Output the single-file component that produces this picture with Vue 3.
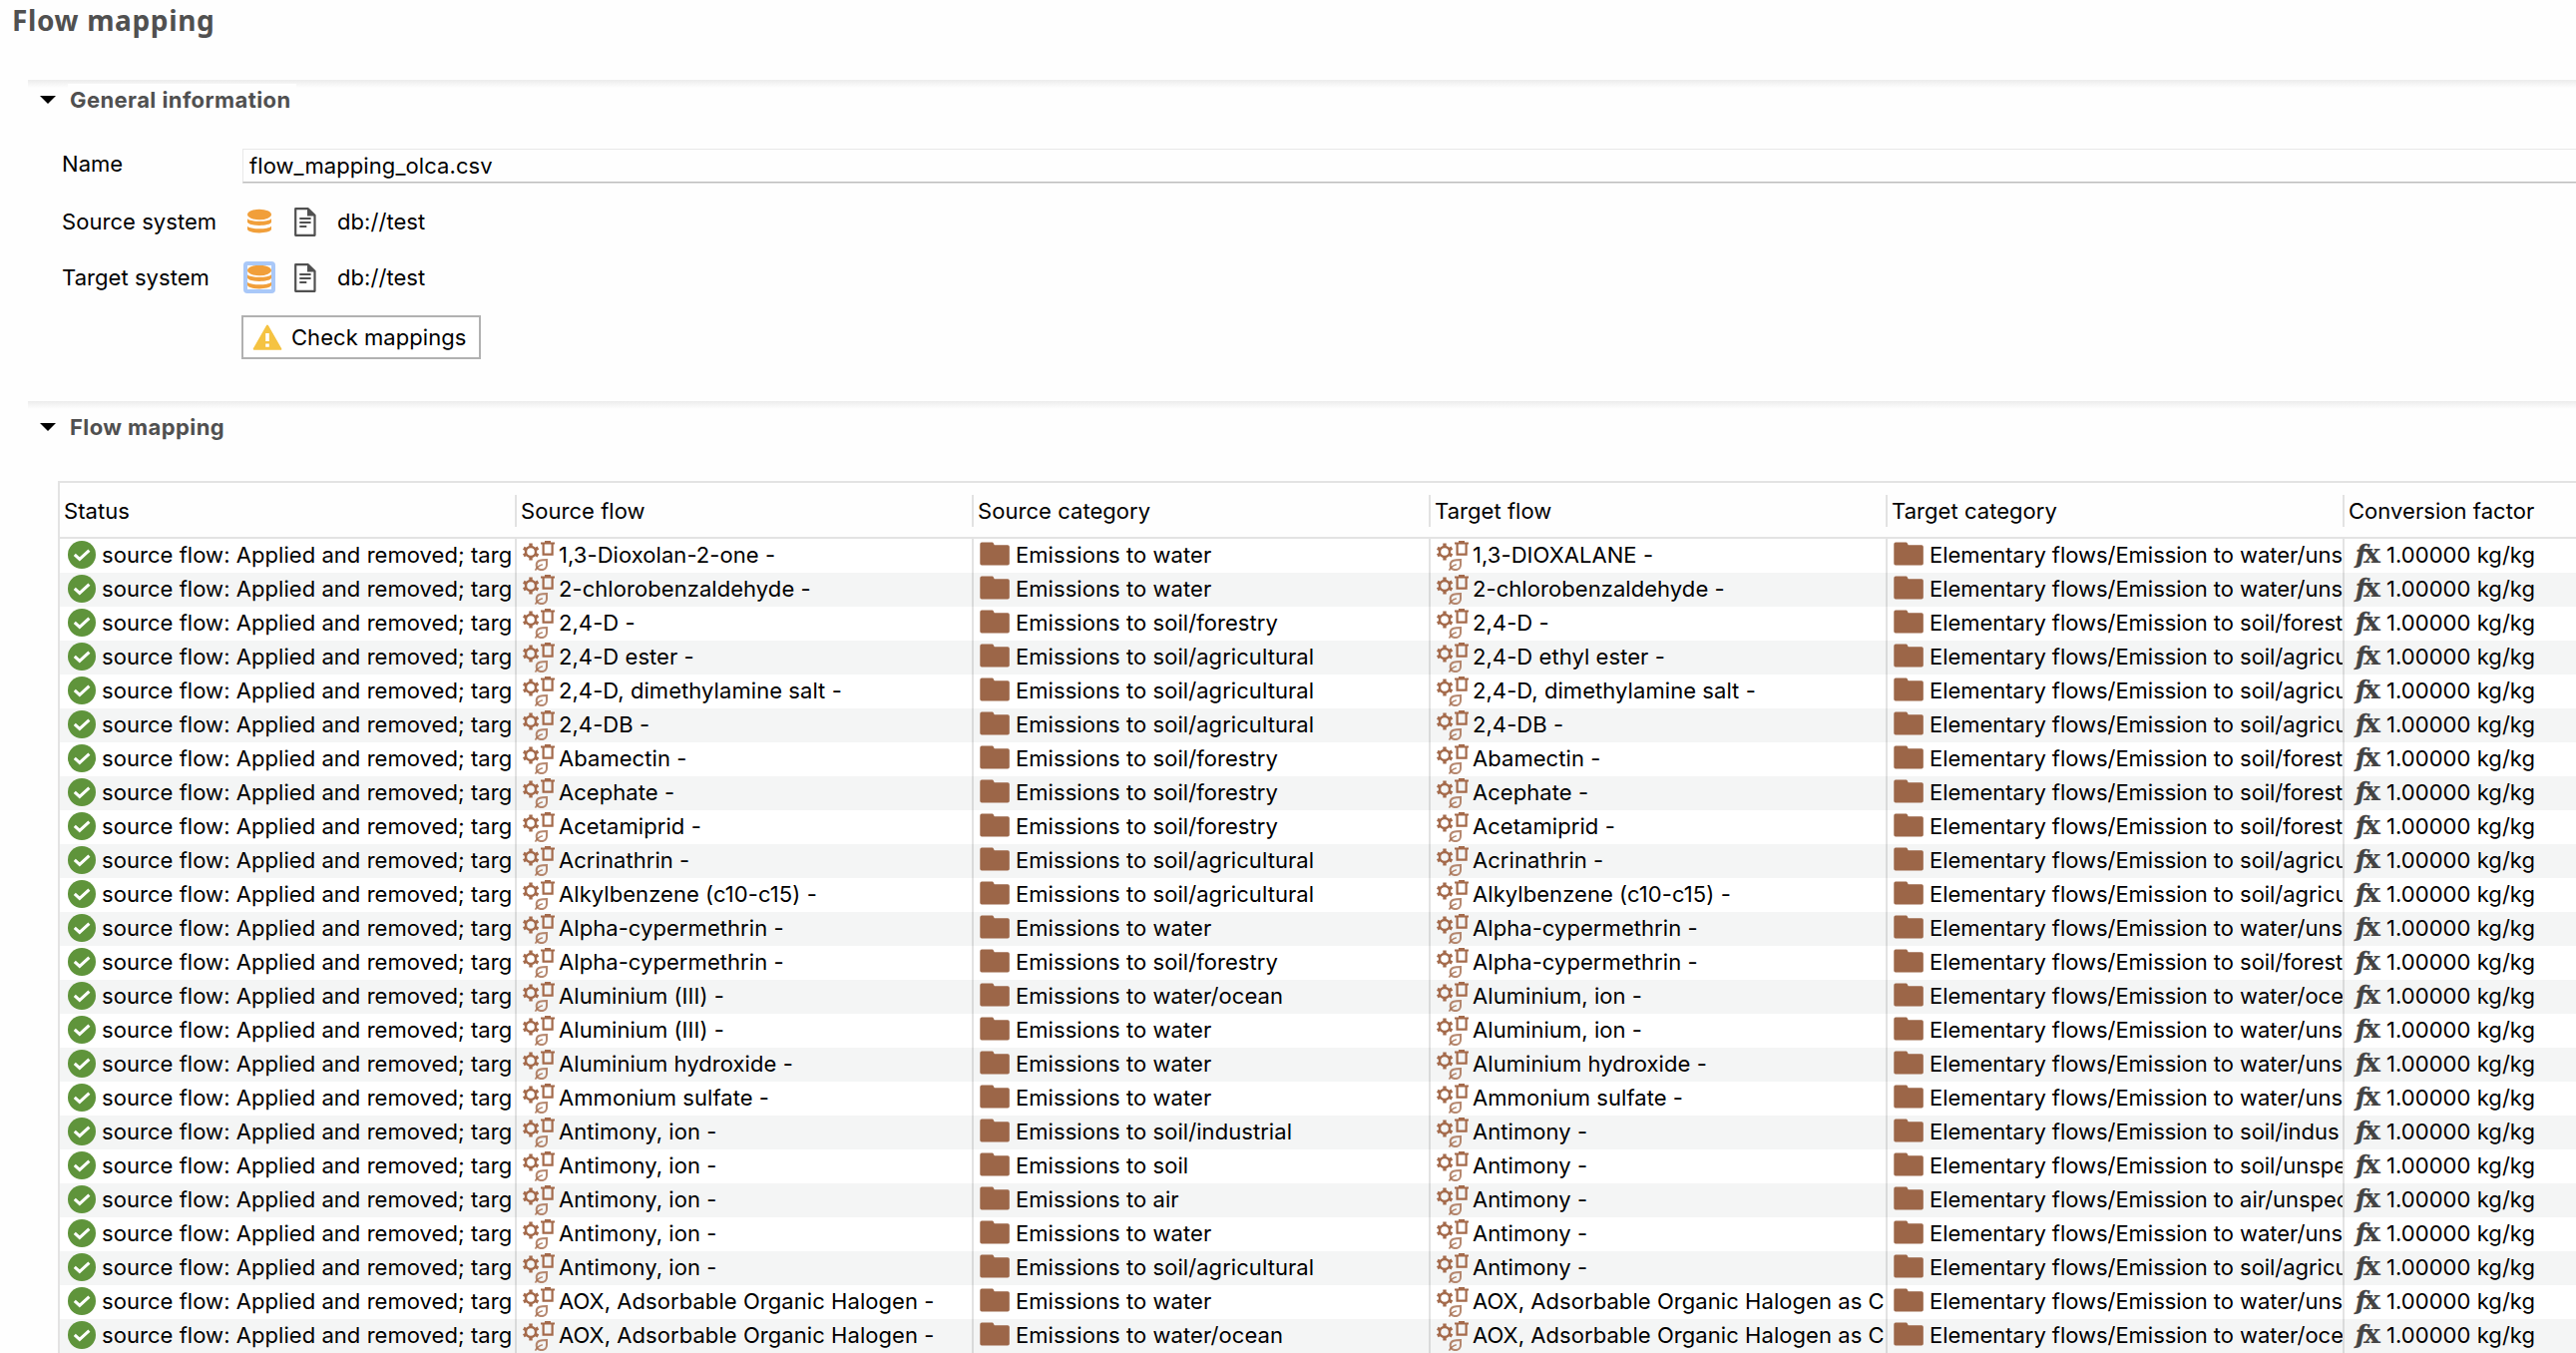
<script setup>
const columns = ['Status', 'Source flow', 'Source category', 'Target flow', 'Target category', 'Conversion factor']

const WATER = 'Elementary flows/Emission to water/uns'
const OCEAN = 'Elementary flows/Emission to water/ocea'
const FOREST = 'Elementary flows/Emission to soil/forest'
const AGRI = 'Elementary flows/Emission to soil/agricu'

const rows = [
  ['1,3-Dioxolan-2-one', 'water', '1,3-DIOXALANE', WATER],
  ['2-chlorobenzaldehyde', 'water', '2-chlorobenzaldehyde', WATER],
  ['2,4-D', 'soil/forestry', '2,4-D', FOREST],
  ['2,4-D ester', 'soil/agricultural', '2,4-D ethyl ester', AGRI],
  ['2,4-D, dimethylamine salt', 'soil/agricultural', '2,4-D, dimethylamine salt', AGRI],
  ['2,4-DB', 'soil/agricultural', '2,4-DB', AGRI],
  ['Abamectin', 'soil/forestry', 'Abamectin', FOREST],
  ['Acephate', 'soil/forestry', 'Acephate', FOREST],
  ['Acetamiprid', 'soil/forestry', 'Acetamiprid', FOREST],
  ['Acrinathrin', 'soil/agricultural', 'Acrinathrin', AGRI],
  ['Alkylbenzene (c10-c15)', 'soil/agricultural', 'Alkylbenzene (c10-c15)', AGRI],
  ['Alpha-cypermethrin', 'water', 'Alpha-cypermethrin', WATER],
  ['Alpha-cypermethrin', 'soil/forestry', 'Alpha-cypermethrin', FOREST],
  ['Aluminium (III)', 'water/ocean', 'Aluminium, ion', OCEAN],
  ['Aluminium (III)', 'water', 'Aluminium, ion', WATER],
  ['Aluminium hydroxide', 'water', 'Aluminium hydroxide', WATER],
  ['Ammonium sulfate', 'water', 'Ammonium sulfate', WATER],
  ['Antimony, ion', 'soil/industrial', 'Antimony', 'Elementary flows/Emission to soil/indus'],
  ['Antimony, ion', 'soil', 'Antimony', 'Elementary flows/Emission to soil/unspe'],
  ['Antimony, ion', 'air', 'Antimony', 'Elementary flows/Emission to air/unspec'],
  ['Antimony, ion', 'water', 'Antimony', WATER],
  ['Antimony, ion', 'soil/agricultural', 'Antimony', AGRI],
  ['AOX, Adsorbable Organic Halogen', 'water', 'AOX, Adsorbable Organic Halogen as C', WATER],
  ['AOX, Adsorbable Organic Halogen', 'water/ocean', 'AOX, Adsorbable Organic Halogen as C', 'Elementary flows/Emission to water/oce'],
].map(([source, category, target, targetCategory]) => [
  { icon: 'check', text: 'source flow: Applied and removed; targ' },
  { icon: 'flow', text: `${source} -` },
  { icon: 'folder', text: `Emissions to ${category}` },
  { icon: 'flow', text: target.endsWith('as C') ? target : `${target} -` },
  { icon: 'folder', text: targetCategory === OCEAN ? OCEAN.slice(0, -1) : targetCategory },
  { icon: 'formula', text: '1.00000 kg/kg' },
])

const systems = [
  { label: 'Source system', value: 'db://test', focused: false },
  { label: 'Target system', value: 'db://test', focused: true },
]
</script>

<template>
  <div class="editor">
    <svg class="defs" width="0" height="0" aria-hidden="true">
      <symbol id="check" viewBox="0 0 32 32">
        <circle cx="16" cy="16" r="14" fill="#5f943b" />
        <path d="M8.800 15.800l5 4.600 9.600-8.800" fill="none" stroke="#fff" stroke-width="3" />
      </symbol>
      <symbol id="flow" viewBox="0 0 32 32">
        <g fill="none" stroke="#a46a4b">
          <circle cx="8" cy="13" r="5" stroke-width="2.400" />
          <path d="M8 4.500v3M8 18.500v3M.8 9.200l2.700 1.500M12.500 15.300l2.900 1.600M.8 16.800l2.700-1.500M12.500 10.700L15.400 9.100" stroke-width="3.400" />
          <path d="M18 4.400h14M22 3h6" stroke-width="2" />
          <path d="M20.600 5v10.600h9V5" stroke-width="2.200" />
          <path d="M24 21c-5 0-10.300.2-10.300 5.300 0 3 2.200 4.800 5.200 4.800 3.200 0 5.100-2.200 5.100-5z" stroke-width="2" stroke-opacity=".8" />
          <path d="M12.500 31.600c1.500-3 3.200-4.800 7.300-5.900" stroke-width="1.700" stroke-opacity=".8" />
        </g>
      </symbol>
      <symbol id="folder" viewBox="0 0 32 32">
        <path d="M2 3.600h10.600q.8 0 1.200.8l.9 1.800H28q1.800 0 1.800 1.800v16.800q0 1.800-1.800 1.800H2Q.3 26.600.3 24.800V5.400Q.3 3.600 2 3.600z" fill="#9c6648" />
      </symbol>
      <symbol id="formula" viewBox="0 0 32 32">
        <text x="5" y="24" class="fx-f">f</text>
        <text x="13" y="24" class="fx-x" textLength="17" lengthAdjust="spacingAndGlyphs">x</text>
      </symbol>
      <symbol id="database" viewBox="0 0 32 32">
        <g fill="#f19f3a">
          <ellipse cx="16" cy="9" rx="12" ry="5.2" />
          <path d="M4 13.200c3 3.500 21 3.500 24 0v3.600c-2 4.200-22 4.200-24 0z" />
          <path d="M4 20.700c3 3.500 21 3.500 24 0v3.400c-2 4.400-22 4.400-24 0z" />
        </g>
      </symbol>
      <symbol id="document" viewBox="0 0 24 32">
        <g fill="none" stroke="#505050" stroke-width="2.200">
          <path d="M2.200 3.200h12.600l6.700 6.600v20H2.200z" stroke-linejoin="round" />
          <path d="M6.300 13h11.300M6.300 17h11.300M6.300 21h7" stroke-width="1.900" />
        </g>
        <path d="M14 3v7.600h7.500z" fill="#505050" />
      </symbol>
    </svg>

    <h1>Flow mapping</h1>

    <section class="general">
      <h2><i class="twistie"></i><span>General information</span></h2>
      <div class="form">
        <div class="field name">
          <label>Name</label>
          <div class="input">flow_mapping_olca.csv</div>
        </div>
        <div v-for="s in systems" :key="s.label" class="field system">
          <label>{{ s.label }}</label>
          <span class="db" :class="{ focused: s.focused }"><svg width="32" height="32"><use href="#database" /></svg></span>
          <svg class="doc" width="24" height="32"><use href="#document" /></svg>
          <span class="value">{{ s.value }}</span>
        </div>
        <div class="field">
          <label></label>
          <button type="button">
            <svg width="30" height="28" viewBox="0 0 30 28">
              <path d="M15 2.500L28.300 25.800H1.700z" fill="#f5c342" stroke="#f5c342" stroke-width="2" stroke-linejoin="round" />
              <path d="M15 10v8M15 20.600v3.200" stroke="#fff" stroke-width="3.600" />
            </svg>
            <span>Check mappings</span>
          </button>
        </div>
      </div>
    </section>

    <section class="mapping">
      <h2><i class="twistie"></i><span>Flow mapping</span></h2>
      <div class="table">
        <div class="row head">
          <div v-for="c in columns" :key="c" class="cell">{{ c }}</div>
        </div>
        <div v-for="(row, i) in rows" :key="i" class="row">
          <div v-for="(cell, j) in row" :key="j" class="cell" :class="cell.icon">
            <svg width="32" height="32"><use :href="'#' + cell.icon" /></svg>
            <span>{{ cell.text }}</span>
          </div>
        </div>
      </div>
    </section>
  </div>
</template>

<style>
body { background: #fefefe; }
.fx-f { font: italic bold 25px "DejaVu Serif", serif; fill: #444; stroke: #444; stroke-width: .4px; }
.fx-x { font: bold 26px "DejaVu Serif", serif; fill: #444; }
</style>

<style scoped>
.editor {
  width: 2582px;
  height: 1356px;
  overflow: hidden;
  color: #000;
  font: 22px/30px Inter, "Liberation Sans", sans-serif;
  letter-spacing: .05px;
  white-space: nowrap;
}
.defs { position: absolute; }
svg { display: block; flex: none; }

h1 {
  box-sizing: border-box;
  height: 80px;
  margin: 0;
  padding: 0 0 0 12px;
  color: #505050;
  font: bold 28px/40px "Noto Sans", sans-serif;
  letter-spacing: .65px;
}

section {
  box-sizing: border-box;
  margin-left: 28px;
  background: linear-gradient(#ececec, #fefefe 8px) no-repeat 0 0 / 100% 8px;
}
.general { height: 322px; }

h2 {
  display: flex;
  align-items: center;
  box-sizing: border-box;
  height: 40px;
  margin: 0;
  padding-left: 12px;
  color: #505050;
  font: bold 22px/32px Inter, sans-serif;
  letter-spacing: .42px;
}
.mapping h2 { height: 52px; }
h2 span { padding: 0 5px 0 2px; margin-left: 12px; background: #fefefe; }
.twistie {
  width: 16px;
  height: 8px;
  background: #000;
  clip-path: polygon(0 0, 100% 0, 50% 100%);
}

.form { padding: 29px 0 0 34px; }
.field { display: flex; align-items: center; }
.field label { flex: none; width: 181px; }
.name { height: 36px; margin-bottom: 8px; }
.name label { padding-bottom: 6px; }
.input {
  flex: 1;
  align-self: flex-start;
  box-sizing: border-box;
  height: 34px;
  padding: 1px 0 0 6px;
  border: 1px solid #e8e8e8;
  border-right: 0;
  border-bottom-color: #bdbdbd;
  box-shadow: 0 1px #dedede;
  line-height: 30px;
  letter-spacing: .08px;
}
.system { height: 56px; }
.system label, .value { padding-top: 2px; }
.db {
  display: flex;
  align-items: center;
  justify-content: center;
  width: 32px;
  height: 32px;
  margin: 2px 18px 0 1px;
}
.db.focused { border-radius: 4px; background: linear-gradient(#fff, #fff) no-repeat center / 24px 24px #a9c8f8; }
.focused svg { clip-path: inset(4px); }
.doc { margin: 2px 20px 0 0; }

button {
  display: flex;
  align-items: center;
  box-sizing: border-box;
  width: 240px;
  height: 44px;
  margin: 11px 0 0 -1px;
  padding: 0 0 0 9px;
  border: 2px solid #b1b1b1;
  background: #fff;
  color: #000;
  font: inherit;
  letter-spacing: inherit;
}
button span { margin-left: 9px; }

.table {
  margin: 28px 0 0 30px;
  border: 2px solid #e3e3e3;
  border-right: 0;
  background: #fff;
}
.row { display: grid; grid-template-columns: repeat(5, 458px) 1fr; height: 34px; }
.row:nth-child(odd) { background: #f4f5f5; }
.cell {
  display: flex;
  height: 34px;
  padding-left: 6px;
  overflow: hidden;
  box-sizing: border-box;
  border-right: 2px solid rgba(0, 0, 0, .11);
}
.cell:last-child { border-right: 0; }
.cell span { margin-left: 4px; padding-top: 1px; }
.cell.flow { letter-spacing: .06px; }
.cell.folder { letter-spacing: -.04px; }
.cell.folder:nth-child(3) { letter-spacing: .06px; }
.row.head { align-items: center; height: 56px; border-bottom: 2px solid #e3e3e3; box-sizing: border-box; background: #fefefe; }
.head .cell { height: 32px; margin-top: 2px; padding-left: 4px; line-height: 32px; }
</style>
